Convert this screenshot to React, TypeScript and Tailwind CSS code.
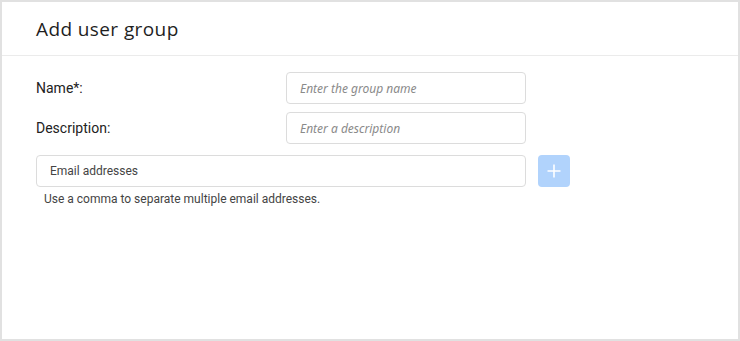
export default function App() {
  return (
    <div className="w-[740px] h-[341px] bg-white border-2 border-[#e1e1e1] flex flex-col" style={{ fontFamily: 'Roboto, "Noto Sans", sans-serif' }}>
      <div className="h-[54px] border-b border-[#ebebeb] flex items-center pl-[34px] pt-[1px]">
        <h1 className="text-[19px] text-[#1f1f1f] tracking-[0.4px]" style={{ fontFamily: '"Open Sans", sans-serif' }}>Add user group</h1>
      </div>
      <div className="pl-[34px] pt-[16px] flex flex-col">
        <div className="flex items-center h-[32px]">
          <label className="w-[250px] text-[14px] text-[#222]">Name*:</label>
          <input
            placeholder="Enter the group name"
            className="w-[240px] h-[32px] border border-[#dcdcdc] rounded-[4px] px-[13px] text-[12px] italic placeholder:text-[#8a8a8a] outline-none"
            style={{ fontFamily: '"Noto Sans", sans-serif' }}
          />
        </div>
        <div className="flex items-center h-[32px] mt-[8px]">
          <label className="w-[250px] text-[14px] text-[#222]">Description:</label>
          <input
            placeholder="Enter a description"
            className="w-[240px] h-[32px] border border-[#dcdcdc] rounded-[4px] px-[13px] text-[12px] italic placeholder:text-[#8a8a8a] outline-none"
            style={{ fontFamily: '"Noto Sans", sans-serif' }}
          />
        </div>
        <div className="flex items-center mt-[11px] gap-[12px]">
          <input
            placeholder="Email addresses"
            className="w-[490px] h-[32px] border border-[#dcdcdc] rounded-[4px] px-[13px] text-[12px] placeholder:text-[#444] outline-none"
          />
          <button className="w-[32px] h-[32px] rounded-[4px] bg-[#b1d3fc] flex items-center justify-center">
            <svg width="16" height="16" viewBox="0 0 16 16" fill="none">
              <path d="M8 1.5v13M1.5 8h13" stroke="white" strokeWidth="1.6" />
            </svg>
          </button>
        </div>
        <p className="text-[12px] text-[#444] pl-[8px] mt-[3px]">Use a comma to separate multiple email addresses.</p>
      </div>
    </div>
  )
}
